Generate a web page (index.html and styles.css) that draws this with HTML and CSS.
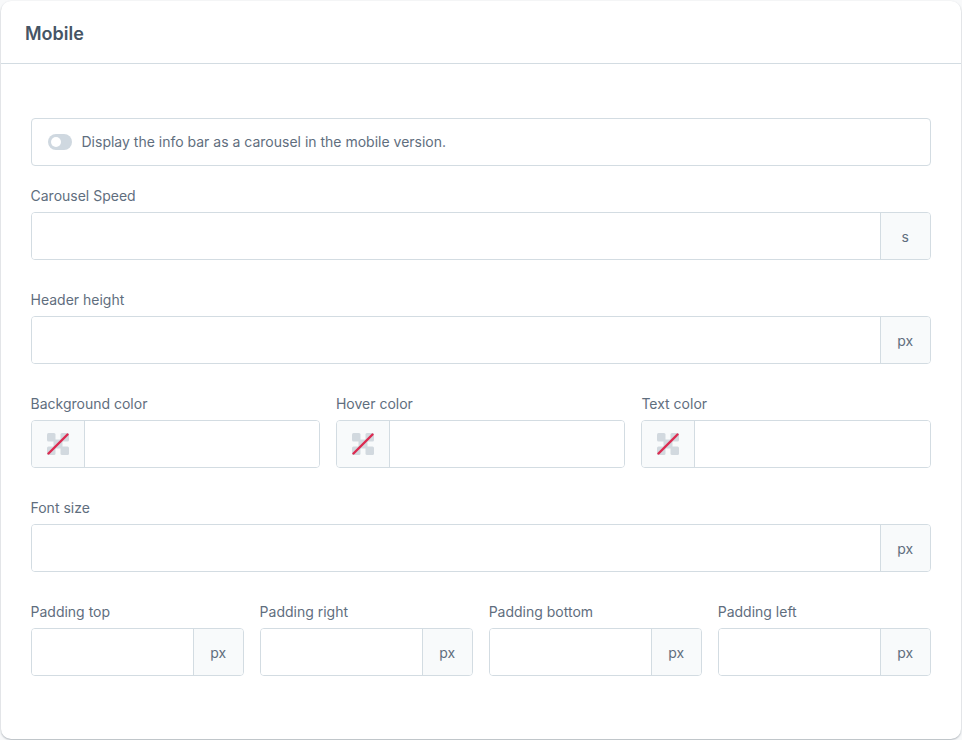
FILE: index.html
```html
<!DOCTYPE html>
<html lang="en">
<head>
<meta charset="utf-8">
<title>Mobile</title>
<link rel="stylesheet" href="styles.css">
</head>
<body>
<section class="card">
  <header class="card-header"><h2 class="card-title">Mobile</h2></header>
  <div class="card-body">
    <div class="switch-box">
      <span class="switch"><span class="switch-knob"></span></span>
      <span class="switch-label">Display the info bar as a carousel in the mobile version.</span>
    </div>
    <div class="row row-first">
      <div class="field">
        <label class="label">Carousel Speed</label>
        <div class="group"><input class="input" type="text"><span class="addon addon-end">s</span></div>
      </div>
    </div>
    <div class="row">
      <div class="field">
        <label class="label">Header height</label>
        <div class="group"><input class="input" type="text"><span class="addon addon-end">px</span></div>
      </div>
    </div>
    <div class="row">
      <div class="field">
        <label class="label">Background color</label>
        <div class="group">
          <span class="addon addon-start"><svg class="swatch" viewBox="0 0 22 22"><use href="#noColor"/></svg></span>
          <input class="input" type="text">
        </div>
      </div>
      <div class="field">
        <label class="label">Hover color</label>
        <div class="group">
          <span class="addon addon-start"><svg class="swatch" viewBox="0 0 22 22"><use href="#noColor"/></svg></span>
          <input class="input" type="text">
        </div>
      </div>
      <div class="field">
        <label class="label">Text color</label>
        <div class="group">
          <span class="addon addon-start"><svg class="swatch" viewBox="0 0 22 22"><use href="#noColor"/></svg></span>
          <input class="input" type="text">
        </div>
      </div>
    </div>
    <div class="row">
      <div class="field">
        <label class="label">Font size</label>
        <div class="group"><input class="input" type="text"><span class="addon addon-end">px</span></div>
      </div>
    </div>
    <div class="row">
      <div class="field">
        <label class="label">Padding top</label>
        <div class="group"><input class="input" type="text"><span class="addon addon-end">px</span></div>
      </div>
      <div class="field">
        <label class="label">Padding right</label>
        <div class="group"><input class="input" type="text"><span class="addon addon-end">px</span></div>
      </div>
      <div class="field">
        <label class="label">Padding bottom</label>
        <div class="group"><input class="input" type="text"><span class="addon addon-end">px</span></div>
      </div>
      <div class="field">
        <label class="label">Padding left</label>
        <div class="group"><input class="input" type="text"><span class="addon addon-end">px</span></div>
      </div>
    </div>
  </div>
</section>
<svg class="defs" width="0" height="0" aria-hidden="true">
  <symbol id="noColor" viewBox="0 0 22 22">
    <rect x="0" y="0" width="8.5" height="8.5" rx="1.5" fill="#d2d9df"/>
    <rect x="13.5" y="0" width="8.5" height="8.5" rx="1.5" fill="#d2d9df"/>
    <rect x="6.5" y="6.5" width="9" height="9" fill="#d2d9df"/>
    <rect x="0" y="13.5" width="8.5" height="8.5" rx="1.5" fill="#d2d9df"/>
    <rect x="13.5" y="13.5" width="8.5" height="8.5" rx="1.5" fill="#d2d9df"/>
    <line x1="1.5" y1="20.5" x2="20.5" y2="1.5" stroke="#dc2a50" stroke-width="2.4" stroke-linecap="round"/>
  </symbol>
</svg>
</body>
</html>
```
FILE: styles.css
```css
* { box-sizing: border-box; }
html, body { height: 100%; }
body {
  margin: 0;
  padding: 1px;
  background: #f8f9fa;
  font-family: Inter, "Liberation Sans", sans-serif;
  font-size: 14px;
  color: #5f6e7e;
}
.card {
  height: 738px;
  background: #fff;
  border-radius: 10px;
  box-shadow: 0 1px 2px rgba(60, 75, 90, 0.4);
}
.card-header {
  height: 63px;
  padding: 4px 24px 0;
  display: flex;
  align-items: center;
  border-bottom: 1px solid #d3dce2;
}
.card-title {
  margin: 0;
  font-size: 18px;
  font-weight: 600;
  line-height: 24px;
  color: #465565;
}
.card-body {
  padding: 54px 30.2px 0 29.5px;
  display: flex;
  flex-direction: column;
  gap: 32px;
}
.switch-box {
  height: 48px;
  margin-bottom: -10px;
  padding: 0 16px;
  display: flex;
  align-items: center;
  gap: 10px;
  border: 1px solid #d3dce2;
  border-radius: 4px;
}
.switch {
  width: 24px;
  height: 16px;
  padding: 3px;
  border-radius: 8px;
  background: #cfd8e0;
}
.switch-knob {
  display: block;
  width: 10px;
  height: 10px;
  border-radius: 50%;
  background: #fff;
}
.switch-label { line-height: 20px; }
.row {
  display: flex;
  gap: 16px;
}
.field {
  flex: 1 1 0;
  min-width: 0;
}
.label {
  display: block;
  height: 24px;
  line-height: 16px;
}
.group {
  display: flex;
  height: 48px;
  border: 1px solid #d3dce2;
  border-radius: 4px;
  overflow: hidden;
}
.input {
  flex: 1 1 0;
  min-width: 0;
  border: 0;
  padding: 0 12px;
  background: #fff;
  font: inherit;
  outline: none;
}
.addon {
  display: flex;
  align-items: center;
  justify-content: center;
  background: #f8fafb;
  flex: none;
}
.addon-end {
  width: 50px;
  border-left: 1px solid #d3dce2;
}
.addon-start {
  width: 53px;
  border-right: 1px solid #d3dce2;
}
.swatch {
  width: 22px;
  height: 22px;
}
.defs { position: absolute; }
```
